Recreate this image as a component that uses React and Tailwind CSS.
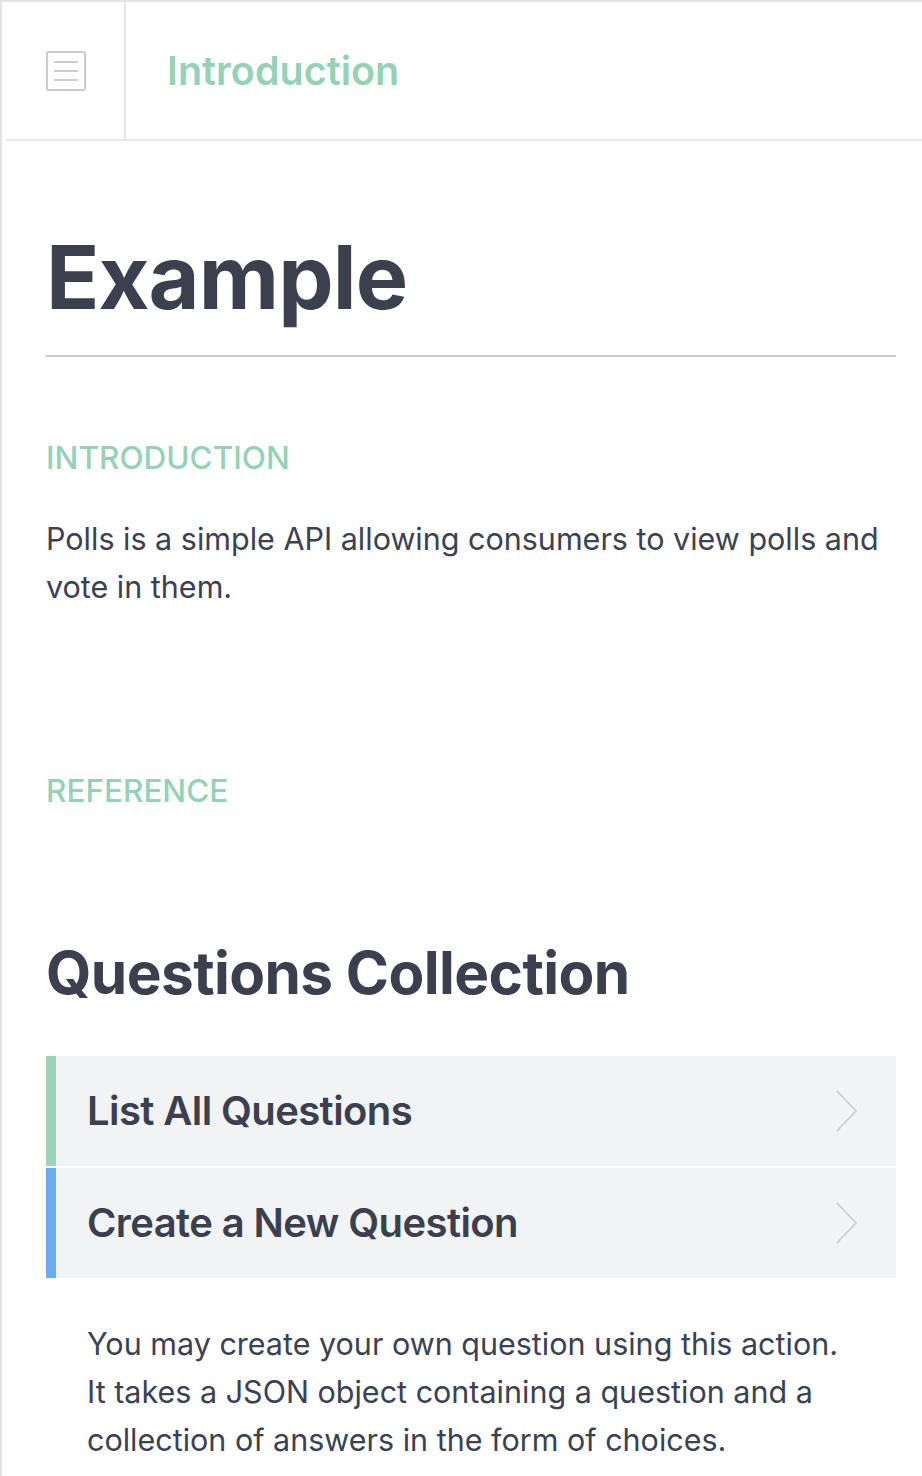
const Chevron = () => (
  <svg width="22" height="42" viewBox="0 0 22 42" fill="none" className="shrink-0">
    <path d="M1 1 L20 21 L1 41" stroke="#c9cbd6" strokeWidth="1.6" />
  </svg>
);

const MenuIcon = () => (
  <div className="flex h-[40px] w-[40px] flex-col items-center justify-center gap-[7px] rounded-[2px] border-2 border-[#c9cbd6]">
    <span className="block h-[2px] w-[24px] bg-[#c9cbd6]" />
    <span className="block h-[2px] w-[24px] bg-[#c9cbd6]" />
    <span className="block h-[2px] w-[24px] bg-[#c9cbd6]" />
  </div>
);

const Action = ({ title, accent }) => (
  <div className="flex h-[110px] items-center bg-[#f2f3f5]">
    <div className={`h-full w-[10px] ${accent}`} />
    <h3 className="flex-1 pl-[31px] text-[40px] font-semibold tracking-[-0.015em] text-[#3b3f4e]">
      {title}
    </h3>
    <div className="pr-[38px]">
      <Chevron />
    </div>
  </div>
);

export default function App() {
  return (
    <div
      className="min-h-[1476px] border-l-2 border-t-2 border-[#e3e3e3] bg-white text-[#3b3f4e]"
      style={{ fontFamily: "Inter, 'Noto Sans', sans-serif" }}
    >
      <header className="ml-[4px] flex h-[139px] border-b-2 border-[#e6e7ec]">
        <div className="flex w-[120px] items-center justify-center border-r-2 border-[#e6e7ec] pl-[2px]">
          <MenuIcon />
        </div>
        <div className="flex items-center pl-[41px] pt-[3px]">
          <h1 className="text-[39.5px] font-semibold text-[#94d2b5]">Introduction</h1>
        </div>
      </header>

      <main className="pl-[44px] pr-[26px]">
        <h1 className="mt-[92px] text-[88px] font-bold leading-none tracking-[-0.01em]">Example</h1>
        <hr className="mt-[34px] border-t-2 border-[#c9cbd6]" />

        <h2 className="mt-[77px] text-[31.5px] font-medium uppercase text-[#94d2b5]">Introduction</h2>
        <p className="mt-[34px] text-[30.5px] leading-[48px] text-[#3c4152]">
          Polls is a simple API allowing consumers to view polls and vote in them.
        </p>

        <h2 className="mt-[156px] text-[31.5px] font-medium uppercase text-[#94d2b5]">Reference</h2>

        <h2 className="mt-[114px] text-[58.5px] font-bold tracking-[-0.01em]">Questions Collection</h2>

        <div className="mt-[40px] flex flex-col gap-[2px]">
          <Action title="List All Questions" accent="bg-[#9bd4b8]" />
          <Action title="Create a New Question" accent="bg-[#6aabf2]" />
        </div>

        <p className="mt-[42px] pl-[41px] pr-[40px] text-[30.5px] leading-[48px] text-[#3c4152]">
          You may create your own question using this action. It takes a JSON object containing a question and a collection of answers in the form of choices.
        </p>
      </main>
    </div>
  );
}
